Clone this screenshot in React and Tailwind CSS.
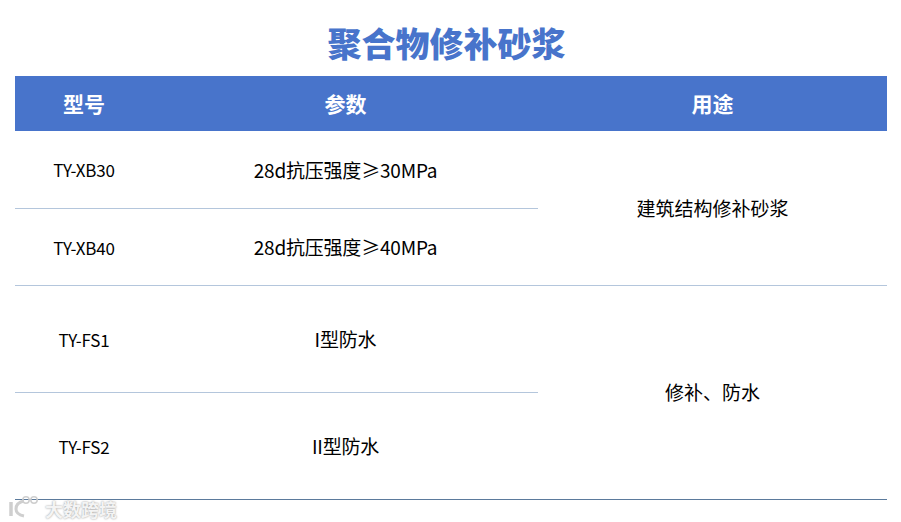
import React from 'react';

const CJK = 'font-["Noto_Sans_CJK_SC","Liberation_Sans",sans-serif]';

function Row({ model, param, h, line }) {
  return (
    <div className={`flex ${h} ${line}`}>
      <div className="w-[138px] flex items-center justify-center pt-[1px] text-[17px] tracking-[-0.2px]">{model}</div>
      <div className="flex-1 flex items-center justify-center pt-[1px] text-[19px] tracking-[-0.2px]">{param}</div>
    </div>
  );
}

export default function App() {
  return (
    <div className={`relative w-[901px] h-[522px] bg-white overflow-hidden text-black ${CJK}`}>
      <h1 className="h-[76px] flex items-center justify-center pt-[8px] pr-[8px] text-[34px] font-black text-[#4874cb]">
        聚合物修补砂浆
      </h1>

      <div className="mx-[15px] w-[872px]">
        {/* header */}
        <div className="flex h-[55px] bg-[#4874cb] text-white text-[21px] font-bold">
          <div className="w-[138px] flex items-center justify-center">型号</div>
          <div className="w-[385px] flex items-center justify-center">参数</div>
          <div className="flex-1 flex items-center justify-center">用途</div>
        </div>

        {/* first group */}
        <div className="flex border-b border-[#b4c6dc]">
          <div className="w-[523px]">
            <Row model="TY-XB30" param="28d抗压强度≥30MPa" h="h-[78px]" line="border-b border-[#b4c6dc]" />
            <Row model="TY-XB40" param="28d抗压强度≥40MPa" h="h-[76px]" />
          </div>
          <div className="flex-1 flex items-center justify-center text-[19px]">建筑结构修补砂浆</div>
        </div>

        {/* second group */}
        <div className="flex border-b border-[#5b7a9c]">
          <div className="w-[523px]">
            <Row model="TY-FS1" param="I型防水" h="h-[107px]" line="border-b border-[#b4c6dc]" />
            <Row model="TY-FS2" param="II型防水" h="h-[106px]" />
          </div>
          <div className="flex-1 flex items-center justify-center text-[19px]">修补、防水</div>
        </div>
      </div>

      {/* watermark */}
      <div className="absolute left-[8px] top-[491px] flex items-center gap-[3px]">
        <svg width="34" height="26" viewBox="0 0 34 26" fill="none" stroke="#cfcfcf">
          <path d="M3 8v14" strokeWidth="3.5" />
          <path d="M16 7c-5 1-8 4-8 8s3 6 8 7" strokeWidth="3" />
          <circle cx="18" cy="6" r="3.2" strokeWidth="1.5" />
          <circle cx="26" cy="6" r="3.2" strokeWidth="1.5" />
        </svg>
        <span className="mt-[5px] text-[18px] font-bold text-[#f4f4f4] [text-shadow:0_0_2px_#8f8f8f]">大数跨境</span>
      </div>
    </div>
  );
}
